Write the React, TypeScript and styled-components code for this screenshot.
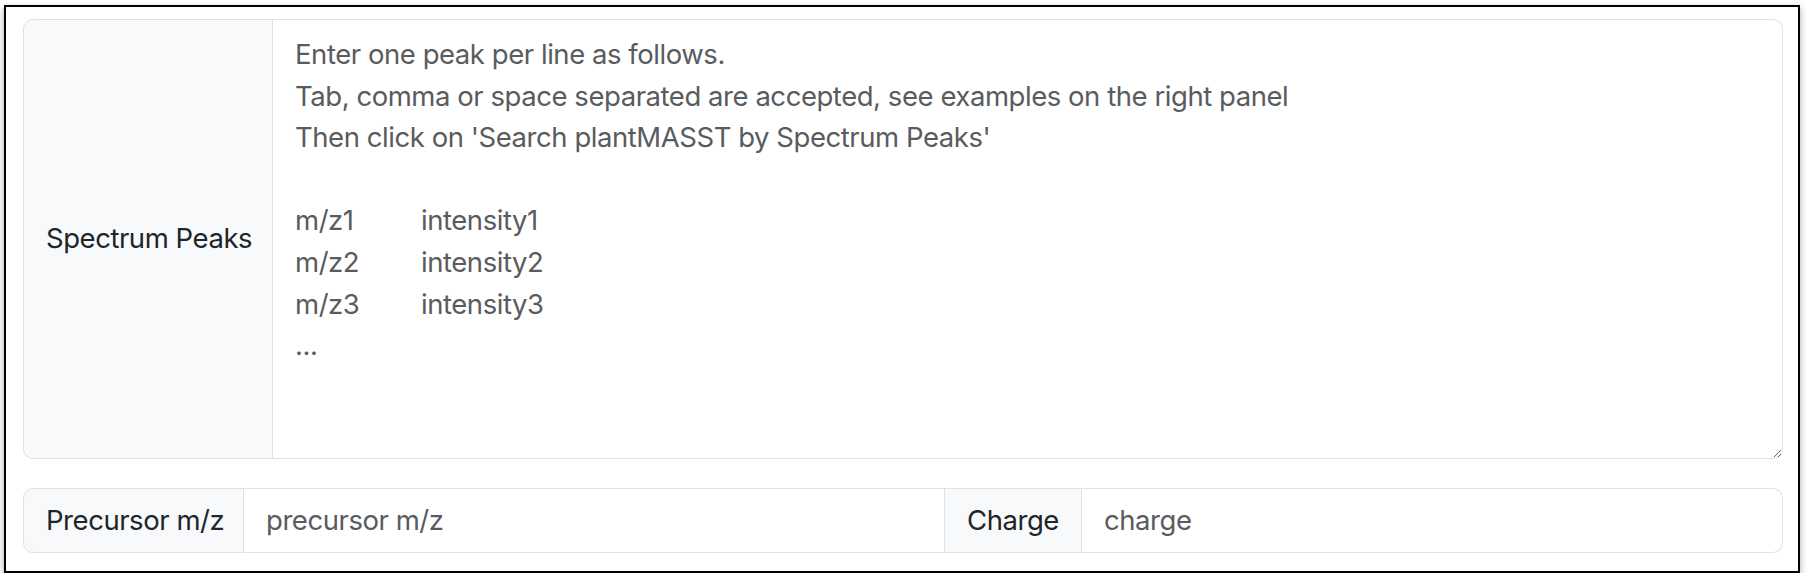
import React from "react";
import styled, { createGlobalStyle } from "styled-components";

const GlobalStyle = createGlobalStyle`
  html, body {
    margin: 0;
    padding: 0;
    background: #ffffff;
  }
  body {
    font-family: Inter, "Noto Sans", "Liberation Sans", sans-serif;
  }
  * { box-sizing: border-box; }
`;

const FONT = `Inter, "Noto Sans", "Liberation Sans", sans-serif`;

const Frame = styled.div`
  margin: 5px 0 0 4px;
  width: 1796px;
  height: 568px;
  border: 2px solid #000;
  background: #fff;
  box-shadow: 0 3px 7px rgba(0, 0, 0, 0.35);
  padding: 12px 15px 18px 17px;
  display: flex;
  flex-direction: column;
  gap: 29px;
`;

const InputGroup = styled.div<{ $height: number }>`
  display: flex;
  align-items: stretch;
  height: ${(p) => p.$height}px;
  width: 100%;
`;

const GroupText = styled.label<{ $width: number; $first?: boolean }>`
  flex: 0 0 ${(p) => p.$width}px;
  width: ${(p) => p.$width}px;
  min-width: 0;
  overflow: hidden;
  display: flex;
  align-items: center;
  padding: 0 0 0 22px;
  background: #f8f9fa;
  border: 1px solid #dee2e6;
  ${(p) => (p.$first ? "" : "border-left: none;")}
  border-radius: ${(p) => (p.$first ? "10px 0 0 10px" : "0")};
  font-family: ${FONT};
  font-size: 27.5px;
  letter-spacing: -0.45px;
  line-height: 1.5;
  color: #212529;
  white-space: nowrap;
`;

const PeaksArea = styled.textarea`
  flex: 1 1 auto;
  min-width: 0;
  margin: 0;
  padding: 14px 22px 10px 22px;
  border: 1px solid #dee2e6;
  border-left: none;
  border-radius: 0 10px 10px 0;
  background: #fff;
  font-family: ${FONT};
  font-size: 27.5px;
  letter-spacing: -0.45px;
  line-height: 41.6px;
  color: #212529;
  resize: vertical;
  outline: none;
  tab-size: 126px;
  &::placeholder {
    color: #595c5f;
    opacity: 1;
    tab-size: 126px;
  }
`;

const TextInput = styled.input<{ $last?: boolean }>`
  flex: 1 1 0;
  min-width: 0;
  margin: 0;
  padding: 0 22px;
  border: 1px solid #dee2e6;
  border-left: none;
  border-radius: ${(p) => (p.$last ? "0 10px 10px 0" : "0")};
  background: #fff;
  font-family: ${FONT};
  font-size: 27.5px;
  letter-spacing: -0.45px;
  line-height: 1.5;
  color: #212529;
  outline: none;
  &::placeholder {
    color: #595c5f;
    opacity: 1;
  }
`;

const placeholder =
  "Enter one peak per line as follows.\n" +
  "Tab, comma or space separated are accepted, see examples on the right panel\n" +
  "Then click on 'Search plantMASST by Spectrum Peaks'\n" +
  "\n" +
  "m/z1\tintensity1\n" +
  "m/z2\tintensity2\n" +
  "m/z3\tintensity3\n" +
  "...";

export default function App() {
  return (
    <>
      <GlobalStyle />
      <Frame>
        <InputGroup $height={440}>
          <GroupText $width={250} $first>
            Spectrum Peaks
          </GroupText>
          <PeaksArea placeholder={placeholder} />
        </InputGroup>
        <InputGroup $height={65}>
          <GroupText $width={221} $first>
            Precursor m/z
          </GroupText>
          <TextInput placeholder="precursor m/z" />
          <GroupText $width={137}>Charge</GroupText>
          <TextInput placeholder="charge" $last />
        </InputGroup>
      </Frame>
    </>
  );
}
